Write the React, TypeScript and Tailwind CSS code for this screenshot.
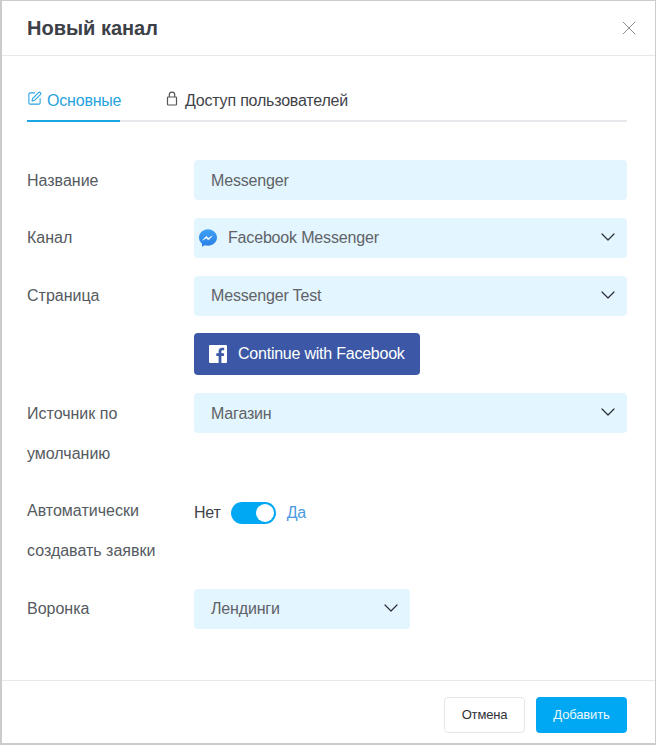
import { ChevronDown, SquarePen, X } from 'lucide-react';

const labelBase = 'w-[167px] shrink-0 text-[16px] leading-[40px] text-[#555a60]';
const labelLow = `${labelBase} pt-[1px] -mb-[1px]`;
const fieldClass = 'flex h-10 items-center justify-between rounded-[4px] bg-[#e3f5fe] text-[16px] tracking-[-0.17px] text-[#5f6368]';

function Chevron() {
  return <ChevronDown size={24} strokeWidth={1.2} className="-mt-[2px] shrink-0 text-[#2b2e33]" />;
}

function Select({ value, className = '', low = false }: { value: string; className?: string; low?: boolean }) {
  return (
    <div className={`${fieldClass} pl-[17px] pr-[7px] ${className}`}>
      <span className={low ? 'pt-[1px]' : ''}>{value}</span>
      <Chevron />
    </div>
  );
}

function MessengerIcon() {
  return (
    <svg width="20" height="20" viewBox="0 0 20 20" className="shrink-0">
      <defs>
        <linearGradient id="msg" x1="0" y1="0" x2="0" y2="1">
          <stop offset="0" stopColor="#3ea0f5" />
          <stop offset="1" stopColor="#2b7fe6" />
        </linearGradient>
      </defs>
      <path d="M10 1.2c-5 0-9 3.7-9 8.4 0 2.5 1.1 4.6 3 6.1v3.1l2.9-1.6c1 .3 2 .5 3.1.5 5 0 9-3.7 9-8.2s-4-8.3-9-8.3z" fill="url(#msg)" />
      <path d="M4.6 12.2l3.7-4 2 2 3.9-2.1-3.8 4-2-2.1z" fill="#fff" stroke="#fff" strokeWidth="0.5" strokeLinejoin="round" />
    </svg>
  );
}

function LockIcon() {
  return (
    <svg width="12" height="15" viewBox="0 0 12 15" fill="none" stroke="#555" strokeWidth="1.2" className="mt-[2px] shrink-0">
      <rect x="1.5" y="6" width="9" height="8" rx="0.8" />
      <path d="M3.3 6V3.8a2.7 2.7 0 0 1 5.4 0V6" />
    </svg>
  );
}

export default function App() {
  return (
    <div className="box-border h-[745px] w-[656px] border-2 border-r-[1px] border-l-[2px] border-t-[1px] border-[#cccccc] bg-white font-['Liberation_Sans',Arial,sans-serif]">
      <div className="flex h-full flex-col">
        <header className="flex h-[55px] shrink-0 items-center justify-between border-b border-[#e8e8e8] pl-[25px] pr-[14px]">
          <h1 className="text-[20px] font-bold text-[#3c4047]">Новый канал</h1>
          <X size={24} strokeWidth={1} className="text-[#8f8f8f]" />
        </header>

        <div className="flex-1 pl-[25px] pr-[28px]">
          <div className="mt-[29px] flex h-[37px] border-b-2 border-[#e6e8ec] text-[16px] tracking-[-0.2px]">
            <div className="-mb-[2px] flex h-[37px] w-[93px] items-start gap-[5px] border-b-2 border-[#1aa5e3] pt-[4px] text-[#27a3e0]">
              <SquarePen size={15} strokeWidth={1.7} className="mt-[2px] shrink-0" />
              <span>Основные</span>
            </div>
            <div className="ml-[46px] flex items-start gap-[7px] pt-[4px] text-[#3f4349]">
              <LockIcon />
              <span>Доступ пользователей</span>
            </div>
          </div>

          <div className="mt-[38px] flex flex-col">
            <div className="flex">
              <div className={labelLow}>Название</div>
              <div className={`${fieldClass} w-[433px] px-[17px]`}>
                <span className="pt-[1px]">Messenger</span>
              </div>
            </div>

            <div className="mt-[18px] flex">
              <div className={labelBase}>Канал</div>
              <div className={`${fieldClass} w-[433px] pl-[4px] pr-[7px]`}>
                <div className="flex items-center gap-[10px]">
                  <MessengerIcon />
                  <span>Facebook Messenger</span>
                </div>
                <Chevron />
              </div>
            </div>

            <div className="mt-[18px] flex">
              <div className={labelBase}>Страница</div>
              <Select value="Messenger Test" className="w-[433px]" />
            </div>

            <div className="mt-[17px] pl-[167px]">
              <button className="flex h-[42px] w-[226px] items-center gap-[11px] rounded-[4px] bg-[#3b57a5] pl-[15px] text-[16px] tracking-[-0.23px] text-white">
                <svg width="18" height="18" viewBox="0 0 18 18" className="shrink-0">
                  <path d="M1 0h16a1 1 0 0 1 1 1v16a1 1 0 0 1-1 1h-4.6v-7h2.4l.4-2.7h-2.8V6.6c0-.8.2-1.3 1.4-1.3h1.4V2.9c-.3 0-1.1-.1-2.1-.1-2.1 0-3.5 1.3-3.5 3.6v1.9H7.3V11h2.3v7H1a1 1 0 0 1-1-1V1a1 1 0 0 1 1-1z" fill="#fff" />
                </svg>
                Continue with Facebook
              </button>
            </div>

            <div className="mt-[18px] flex">
              <div className={labelLow}>Источник по умолчанию</div>
              <Select value="Магазин" className="w-[433px]" low />
            </div>

            <div className="mt-[17px] flex">
              <div className={labelLow}>Автоматически создавать заявки</div>
              <div className="flex h-[45px] items-center text-[16px] tracking-[-0.2px]">
                <span className="text-[#3f4349]">Нет</span>
                <div className="ml-[10px] flex h-[22px] w-[45px] items-center justify-end rounded-full bg-[#00a8f3] pr-[2px]">
                  <div className="h-[18px] w-[18px] rounded-full bg-white" />
                </div>
                <span className="ml-[11px] text-[#4a9ae0]">Да</span>
              </div>
            </div>

            <div className="mt-[19px] flex">
              <div className={labelBase}>Воронка</div>
              <Select value="Лендинги" className="w-[216px]" />
            </div>
          </div>
        </div>

        <footer className="flex h-[63px] shrink-0 items-start justify-end gap-[11px] border-t border-[#e8e8e8] pr-[28px] pt-[16px] text-[13px] tracking-[-0.15px]">
          <button className="h-[36px] w-[81px] rounded-[4px] border border-[#e4e6e8] bg-white text-[#2f3237]">Отмена</button>
          <button className="h-[36px] w-[91px] rounded-[4px] bg-[#00a8f3] text-[#eaf7fe]">Добавить</button>
        </footer>
      </div>
    </div>
  );
}
